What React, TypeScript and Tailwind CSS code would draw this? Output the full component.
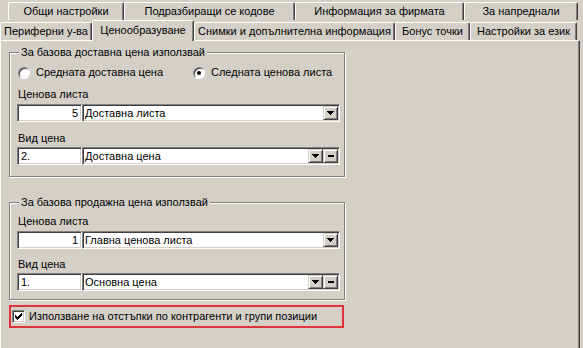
import type { ReactNode } from "react"

const topTabs = [
  { label: "Общи настройки", w: "w-[116px]" },
  { label: "Подразбиращи се кодове", w: "w-[171px]" },
  { label: "Информация за фирмата", w: "w-[169px]" },
  { label: "За напреднали", w: "w-[114px]" },
]

const bottomTabs = [
  { label: "Периферни у-ва", w: "w-[92px]", active: false },
  { label: "Ценообразуване", w: "w-[102px]", active: true },
  { label: "Снимки и допълнителна информация", w: "w-[201px]", active: false },
  { label: "Бонус точки", w: "w-[75px]", active: false },
  { label: "Настройки за език", w: "w-[107px]", active: false },
]

const sunken =
  "border border-t-[#808080] border-l-[#808080] border-r-white border-b-white shadow-[inset_1px_1px_0_#404040,inset_-1px_-1px_0_#d4d0c8]"
const raised =
  "bg-[#d4d0c8] border border-t-[#d4d0c8] border-l-[#d4d0c8] border-r-[#404040] border-b-[#404040] shadow-[inset_1px_1px_0_#fff,inset_-1px_-1px_0_#808080]"

function Tab({ label, w, active }: { label: string; w: string; active?: boolean }) {
  if (active) {
    return (
      <div
        className={`${w} relative z-10 -mb-[1px] h-[21px] flex items-start justify-center pt-[3px] bg-[#d4d0c8] border-t border-l border-white border-r border-r-[#404040] shadow-[inset_-1px_0_0_#808080] rounded-t-[2px]`}
      >
        {label}
      </div>
    )
  }
  return (
    <div
      className={`${w} h-[18px] flex items-center justify-center bg-[#d4d0c8] border-t border-l border-white border-r border-r-[#404040] shadow-[inset_-1px_0_0_#808080] rounded-t-[2px]`}
    >
      {label}
    </div>
  )
}

function DropButton() {
  return (
    <div className={`${raised} w-[15px] h-[14px] flex items-center justify-center`}>
      <svg width="7" height="4" viewBox="0 0 7 4" shapeRendering="crispEdges">
        <path d="M0 0h7v1h-1v1h-1v1h-1v1h-1v-1h-1v-1h-1v-1h-1z" fill="#000" />
      </svg>
    </div>
  )
}

function MinusButton() {
  return (
    <div className={`${raised} w-[15px] h-[14px] flex items-center justify-center`}>
      <div className="w-[6px] h-[2px] bg-black" />
    </div>
  )
}

function PriceRow({
  num,
  right,
  value,
  minus,
  className,
}: {
  num: string
  right?: boolean
  value: string
  minus?: boolean
  className?: string
}) {
  return (
    <div className={`flex h-[18px] ${className ?? ""}`}>
      <div
        className={`w-[65px] bg-white ${sunken} flex items-center ${right ? "justify-end pr-[3px]" : "pl-[3px]"}`}
      >
        {num}
      </div>
      <div className={`flex-1 bg-white ${sunken} flex items-center pl-[2px] pr-[1px]`}>
        <span className="flex-1">{value}</span>
        <DropButton />
        {minus && <MinusButton />}
      </div>
    </div>
  )
}

function Radio({ checked, label, className }: { checked?: boolean; label: string; className?: string }) {
  return (
    <div className={`flex items-center gap-[6px] ${className ?? ""}`}>
      <div className="w-[12px] h-[12px] rounded-full bg-white border border-t-[#808080] border-l-[#808080] border-r-white border-b-white shadow-[inset_1px_1px_0_#404040] flex items-center justify-center">
        {checked && <div className="w-[4px] h-[4px] rounded-full bg-black" />}
      </div>
      <span>{label}</span>
    </div>
  )
}

function GroupBox({ title, className, children }: { title: string; className?: string; children: ReactNode }) {
  return (
    <div
      className={`relative w-[336px] border border-[#808080] shadow-[1px_1px_0_#fff,inset_1px_1px_0_#fff] px-[7px] pr-[4px] ${className ?? ""}`}
    >
      <span className="absolute -top-[7px] left-[9px] px-[2px] bg-[#d4d0c8] leading-[13px]">{title}</span>
      {children}
    </div>
  )
}

export default function App() {
  return (
    <div
      className="w-[583px] h-[348px] overflow-hidden bg-[#d4d0c8] text-[11px] text-black leading-[13px]"
      style={{ fontFamily: '"Liberation Sans", Arial, sans-serif' }}
    >
      {/* Tabs */}
      <div className="flex h-[20px] items-end pl-[8px]">
        {topTabs.map((t) => (
          <Tab key={t.label} label={t.label} w={t.w} />
        ))}
      </div>
      <div className="flex h-[20px] items-end">
        {bottomTabs.map((t) => (
          <Tab key={t.label} label={t.label} w={t.w} active={t.active} />
        ))}
      </div>

      {/* Page */}
      <div className="w-[580px] h-[320px] border-t border-l border-white border-r border-r-[#404040] shadow-[inset_-1px_0_0_#808080] pl-[8px]">
        <GroupBox title="За базова доставна цена използвай" className="mt-[11px] h-[125px] pt-[13px]">
          <div className="flex h-[13px] pl-[1px]">
            <Radio label="Средната доставна цена" className="w-[175px]" />
            <Radio label="Следната ценова листа" checked />
          </div>
          <div className="mt-[9px] pl-[1px]">Ценова листа</div>
          <PriceRow num="5" right value="Доставна листа" className="mt-[3px]" />
          <div className="mt-[10px] pl-[1px]">Вид цена</div>
          <PriceRow num="2." value="Доставна цена" minus className="mt-[2px]" />
        </GroupBox>

        <GroupBox title="За базова продажна цена използвай" className="mt-[25px] h-[98px] pt-[12px]">
          <div className="pl-[1px]">Ценова листа</div>
          <PriceRow num="1" right value="Главна ценова листа" className="mt-[3px]" />
          <div className="mt-[9px] pl-[1px]">Вид цена</div>
          <PriceRow num="1." value="Основна цена" minus className="mt-[2px]" />
        </GroupBox>

        <div className="mt-[5px] w-[335px] h-[23px] border-2 border-[#e0323a] flex items-center pl-[1px] gap-[4px]">
          <div className={`w-[13px] h-[13px] bg-white ${sunken} flex items-center justify-center`}>
            <svg width="7" height="7" viewBox="0 0 7 7" shapeRendering="crispEdges">
              <path d="M6 0h1v3h-1v1h-1v1h-1v1h-1v1h-1v-1h-1v-1h-1v-3h1v1h1v1h1v-1h1v-1h1v-1h1z" fill="#000" />
            </svg>
          </div>
          <span>Използване на отстъпки по контрагенти и групи позиции</span>
        </div>
      </div>
    </div>
  )
}
